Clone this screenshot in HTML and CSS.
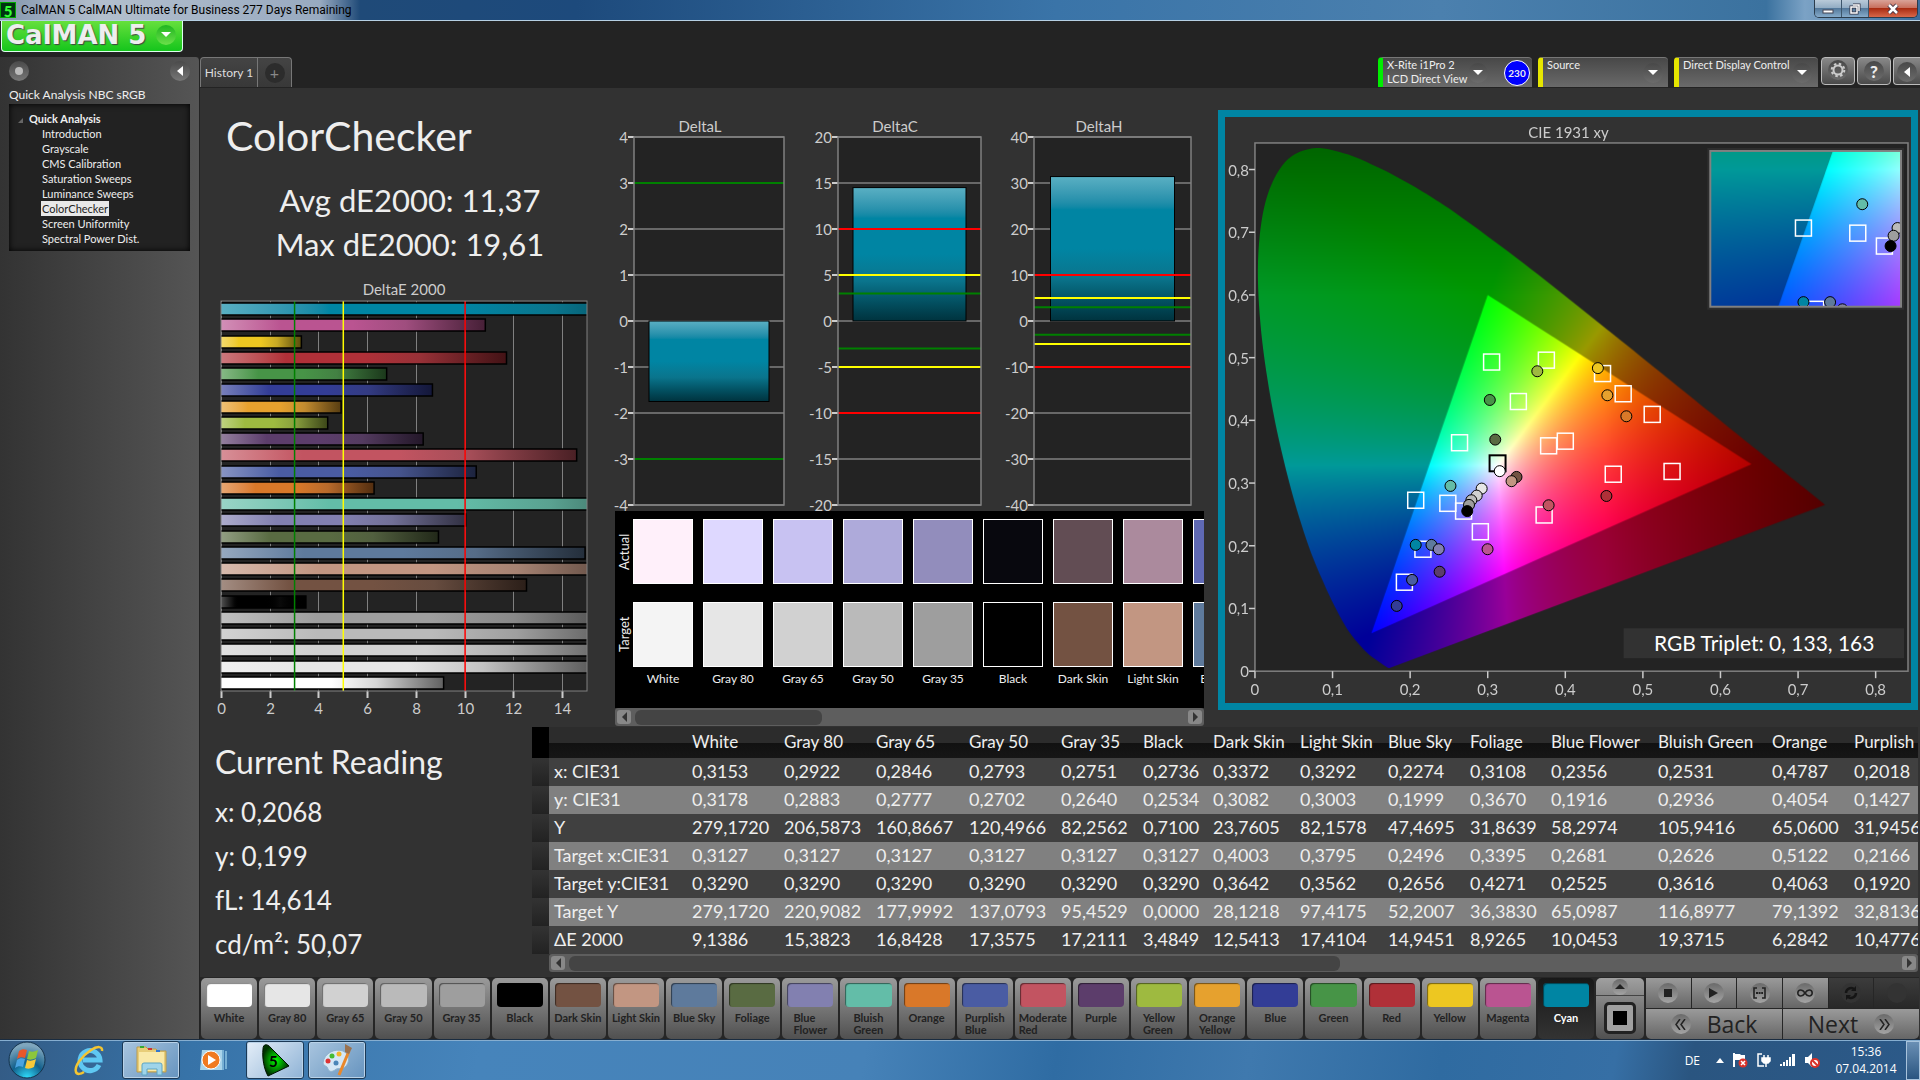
FILE: index.html
```html
<!DOCTYPE html>
<html lang="en">
<head>
  <meta charset="UTF-8">
  <meta name="viewport" content="width=device-width, initial-scale=1.0">
  <title>CalMAN 5</title>
  <link rel="stylesheet" href="styles.css">
</head>
<body>
  <div class="titlebar">
    <span class="app-icon">5</span>
    <span class="title">CalMAN 5 CalMAN Ultimate for Business 277 Days Remaining</span>
    <div class="window-buttons">
      <button aria-label="Minimize"><svg width="12" height="12"><rect x="1" y="7" width="10" height="3" fill="#fff" stroke="#445" /></svg></button>
      <button aria-label="Restore"><svg width="12" height="12" fill="none" stroke="#334" stroke-width="3"><path d="M4 2h6v6" /><rect x="2" y="4" width="6" height="6" /><g stroke="#fff" stroke-width="1.5"><path d="M4 2h6v6" /><rect x="2" y="4" width="6" height="6" /></g></svg></button>
      <button class="close" aria-label="Close"><svg width="14" height="12"><path d="M3 2l8 8M11 2l-8 8" stroke="#434" stroke-width="4.5" /><path d="M3 2l8 8M11 2l-8 8" stroke="#fff" stroke-width="2.5" /></svg></button>
    </div>
  </div>

  <header class="header">
    <button class="logo">
      <span class="logo-text">CalMAN 5</span>
      <span class="round lime"><svg width="10" height="6"><path d="M0 0h10L5 5z" fill="#fff" /></svg></span>
    </button>
  </header>

  <div class="app">
    <aside class="sidebar">
      <div class="sidebar-tools">
        <button class="round" aria-label="Pin"><svg width="10" height="10"><circle cx="5" cy="5" r="4" fill="#bbb" /></svg></button>
        <button class="round" aria-label="Collapse"><svg width="6" height="10"><path d="M6 0v10L0 5z" fill="#fff" /></svg></button>
      </div>
      <div class="workflow">Quick Analysis NBC sRGB</div>
      <nav class="tree">
        <div class="tree-title"><svg width="5" height="5"><path d="M5 0v5H0z" fill="#666" /></svg>Quick Analysis</div>
        <a href="#">Introduction</a>
        <a href="#">Grayscale</a>
        <a href="#">CMS Calibration</a>
        <a href="#">Saturation Sweeps</a>
        <a href="#">Luminance Sweeps</a>
        <a href="#" class="current">ColorChecker</a>
        <a href="#">Screen Uniformity</a>
        <a href="#">Spectral Power Dist.</a>
      </nav>
    </aside>

    <main class="main">
      <div class="tabs">
        <button class="tab">History 1</button>
        <button class="tab add" aria-label="Add"><span class="round dark">+</span></button>
        <div class="devices">
          <button class="device meter">
            <span class="device-name">X-Rite i1Pro 2<br>LCD Direct View</span>
            <span class="round dim"><svg width="10" height="6"><path d="M0 0h10L5 5z" fill="#fff" /></svg></span>
            <span class="badge">230</span>
          </button>
          <button class="device source">
            <span class="device-name">Source</span>
            <span class="round dim"><svg width="10" height="6"><path d="M0 0h10L5 5z" fill="#fff" /></svg></span>
          </button>
          <button class="device display">
            <span class="device-name">Direct Display Control</span>
            <span class="round dim"><svg width="10" height="6"><path d="M0 0h10L5 5z" fill="#fff" /></svg></span>
          </button>
          <button class="tool" aria-label="Settings"><span class="round dim"><svg width="16" height="16" fill="none" stroke="#ccc"><circle cx="8" cy="8" r="4.5" stroke-width="2" /><circle cx="8" cy="8" r="6.3" stroke-width="2" stroke-dasharray="2.5 2.45" /></svg></span></button>
          <button class="tool" aria-label="Help"><span class="round dim">?</span></button>
          <button class="tool last" aria-label="Hide"><span class="round dim"><svg width="6" height="10"><path d="M6 0v10L0 5z" fill="#fff" /></svg></span></button>
        </div>
      </div>

      <div class="charts">
        <section class="summary">
          <h1>ColorChecker</h1>
          <p class="stat">Avg dE2000: 11,37</p>
          <p class="stat">Max dE2000: 19,61</p>
          <svg id="deltaE" class="chart" viewBox="0 0 404 440"></svg>
        </section>

        <section class="deltas">
          <div class="delta-row">
            <svg id="deltaL" class="chart" viewBox="0 0 200 399"></svg>
            <svg id="deltaC" class="chart" viewBox="0 0 200 399"></svg>
            <svg id="deltaH" class="chart" viewBox="0 0 200 399"></svg>
          </div>
          <div class="compare">
            <div class="compare-titles"><span>Actual</span><span>Target</span></div>
            <div class="compare-list" id="compare"></div>
          </div>
          <div class="scrollbar">
            <button aria-label="Left"><svg width="5" height="10"><path d="M5 0v10L0 5z" /></svg></button>
            <div class="track"><div class="thumb short"></div></div>
            <button aria-label="Right"><svg width="5" height="10"><path d="M0 0v10L5 5z" /></svg></button>
          </div>
        </section>

        <section class="cie">
          <div class="cie-frame">
            <canvas id="gamut" width="687" height="587"></canvas>
            <svg id="cie" class="chart" viewBox="0 0 687 587"></svg>
          </div>
        </section>
      </div>

      <div class="readings">
        <section class="current-reading">
          <h2>Current Reading</h2>
          <p>x: 0,2068</p>
          <p>y: 0,199</p>
          <p>fL: 14,614</p>
          <p>cd/m²: 50,07</p>
        </section>
        <section class="grid">
          <div class="table-wrap">
            <table id="table"></table>
          </div>
          <div class="scrollbar">
            <button aria-label="Left"><svg width="5" height="10"><path d="M5 0v10L0 5z" /></svg></button>
            <div class="track"><div class="thumb long"></div></div>
            <button aria-label="Right"><svg width="5" height="10"><path d="M0 0v10L5 5z" /></svg></button>
          </div>
        </section>
      </div>

      <div class="bottom">
        <div class="patches" id="patches"></div>
        <div class="pattern">
          <button class="up" aria-label="Up"><span class="round mid"><svg width="10" height="6"><path d="M0 5h10L5 0z" fill="#222" /></svg></span></button>
          <button class="window" aria-label="Pattern window"><span></span></button>
        </div>
        <div class="controls">
          <button aria-label="Stop"><span class="round mid"><svg width="8" height="8"><rect width="8" height="8" fill="#222" /></svg></span></button>
          <button aria-label="Play"><span class="round mid"><svg width="9" height="10"><path d="M0 0l9 5-9 5z" fill="#222" /></svg></span></button>
          <button aria-label="Series"><span class="round mid"><svg width="13" height="12" fill="none" stroke="#222" stroke-width="1.6"><path d="M4 1H1v10h3M9 1h3v10H9" /><path d="M3 6h7" stroke-dasharray="2 .6" stroke-width="2" /></svg></span></button>
          <button aria-label="Continuous"><span class="round mid"><svg width="16" height="8" fill="none" stroke="#222" stroke-width="1.6"><path d="M8 4C6 1 4.500 1 3.800 1a3 3 0 0 0 0 6C4.500 7 6 7 8 4s3.500-3 4.200-3a3 3 0 0 1 0 6C11.500 7 10 7 8 4z" /></svg></span></button>
          <button class="off" aria-label="Refresh"><span class="round black"><svg width="14" height="14" fill="none" stroke="#151515" stroke-width="2.500"><path d="M2 7a5 5 0 0 1 8-4M12 7a5 5 0 0 1-8 4" /><path d="M12 0v5H7zM2 14V9h5z" fill="#151515" stroke="none" /></svg></span></button>
          <button class="off" aria-label="None"><span class="round black"></span></button>
          <button class="nav"><span class="round mid"><svg width="11" height="11" fill="none" stroke="#222" stroke-width="1.500"><path d="M5 0L1 5.500 5 11M10 0L6 5.500 10 11" /></svg></span>Back</button>
          <button class="nav next">Next<span class="round mid"><svg width="11" height="11" fill="none" stroke="#222" stroke-width="1.500"><path d="M1 0l4 5.500L1 11M6 0l4 5.500L6 11" /></svg></span></button>
        </div>
      </div>
    </main>
  </div>

  <footer class="taskbar">
    <button class="task" aria-label="Start">
      <svg width="38" height="38" viewBox="0 0 38 38">
        <defs><radialGradient id="orb" cx=".5" cy="1" r=".9"><stop offset="0" stop-color="#2fe0ff" /><stop offset=".5" stop-color="#12608c" /><stop offset="1" stop-color="#7fa6bd" /></radialGradient></defs>
        <circle cx="19" cy="19" r="18" fill="url(#orb)" stroke="#15334d" />
        <path d="M11 10c3-2 5-2 8-1l-2 8c-3-1-5-1-8 1z" fill="#e8572a" />
        <path d="M21 10c3 1 5 1 9-1l-2 8c-4 2-6 2-9 1z" fill="#8cc63c" />
        <path d="M9 19c3-2 5-2 8-1l-2 8c-3-1-5-1-8 1z" fill="#4aa3e0" />
        <path d="M19 19c3 1 5 1 9-1l-2 8c-4 2-6 2-9 1z" fill="#f8c93a" />
      </svg>
    </button>
    <button class="task" aria-label="Internet Explorer">
      <svg width="34" height="34" viewBox="0 0 34 34" fill="none">
        <path d="M27 22a10 10 0 1 1 1-5H11" stroke="#5fc8f2" stroke-width="5" />
        <path d="M30 8c1-5-5-5-11-1C10 13 2 23 4 29c1 3 5 2 8 0" stroke="#f4c531" stroke-width="2.500" />
      </svg>
    </button>
    <button class="task open" aria-label="Explorer">
      <svg width="34" height="32" viewBox="0 0 34 32">
        <path d="M3 3h9l2 2h8l2 2h8v21H3z" fill="#e8cd78" stroke="#b99b4c" />
        <path d="M5 8h25v19H5z" fill="#f9e9a8" />
        <rect x="6" y="2" width="4" height="2" fill="#3a3" /><rect x="14" y="4" width="4" height="2" fill="#c33" /><rect x="22" y="6" width="4" height="2" fill="#37c" />
        <path d="M8 31V21q0-2 2-2h16q2 0 2 2v10h-5v-6H13v6z" fill="#9fd4ea" stroke="#5da5c4" />
      </svg>
    </button>
    <button class="task" aria-label="Media Player">
      <svg width="28" height="26" viewBox="0 0 28 26">
        <path d="M3 3h20v20H1z" fill="#a9d4ea" /><path d="M24 3v20M27 4v18" stroke="#8cc4e2" stroke-width="1.500" />
        <circle cx="12" cy="13" r="9" fill="#f07a20" stroke="#fff" /><path d="M9 8l8 5-8 5z" fill="#fff" />
      </svg>
    </button>
    <button class="task open active" aria-label="CalMAN">
      <svg width="30" height="34" viewBox="0 0 30 34">
        <defs><radialGradient id="calman"><stop offset="0" stop-color="#0f0" /><stop offset="1" stop-color="#030" /></radialGradient></defs>
        <path d="M3 6C3 1 7 0 11 5l18 18L8 33C4 26 2 15 3 6z" fill="url(#calman)" stroke="#010" />
        <text x="9" y="24" class="task-five">5</text>
      </svg>
    </button>
    <button class="task open" aria-label="Paint">
      <svg width="32" height="34" viewBox="0 0 32 34">
        <path d="M2 20C3 10 14 5 22 8c7 3 7 12 2 16-4 3-7 0-10 3-3 2-6 2-7-1 0-3-5-3-5-6z" fill="#d5e8f6" stroke="#8fb3cd" />
        <circle cx="7" cy="18" r="2.500" fill="#d33" /><circle cx="11" cy="13" r="2.500" fill="#4b3" /><circle cx="18" cy="11" r="2.500" fill="#f4b52c" /><circle cx="15" cy="20" r="2.500" fill="#4a86b8" />
        <path d="M28 8L18 32" stroke="#e8882c" stroke-width="3" /><path d="M24 1l7 4-3 6-4-2z" fill="#9a7250" />
      </svg>
    </button>
    <div class="tray">
      <span class="lang">DE</span>
      <svg width="8" height="5"><path d="M0 5h8L4 0z" fill="#fff" /></svg>
      <svg width="16" height="16"><path d="M2 1v14" stroke="#fff" stroke-width="2" /><path d="M3 2h5l1 1h4v6H9L8 8H3z" fill="#fff" /><circle cx="11" cy="11" r="4.500" fill="#d8322a" /><path d="M9 9l4 4M13 9l-4 4" stroke="#fff" stroke-width="1.500" /></svg>
      <svg width="16" height="16" fill="none" stroke="#fff" stroke-width="1.500"><path d="M6 2H2v12h6M8 3v3M12 3v3M10 11v4" /><path d="M6 6h8v3l-2 2H8L6 9z" fill="#fff" /></svg>
      <svg width="16" height="14" fill="#fff"><path d="M0 11h2v2H0zM3 9h2v4H3zM6 7h2v6H6zM9 4h2v9H9zM12 1h3v12h-3z" /></svg>
      <svg width="16" height="16"><path d="M1 5h3l4-4v14l-4-4H1z" fill="#fff" /><circle cx="11" cy="11" r="4" fill="#fff" stroke="#d8322a" stroke-width="2" /><path d="M8 8l6 6" stroke="#d8322a" stroke-width="2" /></svg>
      <div class="clock">15:36<br>07.04.2014</div>
      <button class="show-desktop" aria-label="Show desktop"></button>
    </div>
  </footer>
  <script src="script.js"></script>
</body>
</html>
```

FILE: styles.css
```css
* {
  box-sizing: border-box;
}
body {
  margin: 0;
  height: 100vh;
  display: flex;
  flex-direction: column;
  overflow: hidden;
  background: #232323;
  color: #eee;
  font-family: Lato, "Open Sans", sans-serif;
  font-size: 12px;
}
button {
  font: inherit;
  color: inherit;
  border: 0;
  padding: 0;
  background: none;
}
h1, h2, p {
  margin: 0;
  font-weight: 400;
}

/* title bar */
.titlebar {
  flex: none;
  height: 21px;
  display: flex;
  align-items: center;
  padding-right: 2px;
  border-bottom: 1px solid #b6d0e4;
  background: linear-gradient(90deg, #8497ae 0, #b3bfcd 100px, #98aac0 320px, #1f4a78 360px, #1d4a7c 30%, #3a74a8 55%, #4b80ae 75%, #3b729f 92%, #7ba2c5 94%, #3b6d9d 100%);
}
.app-icon {
  width: 16px;
  height: 16px;
  line-height: 16px;
  text-align: center;
  font-weight: 900;
  font-size: 15px;
  color: #3f3;
  background: #031;
  border: 1px solid #0a0;
}
.title {
  flex: 1;
  padding-left: 5px;
  color: #000;
  font: 12px Roboto, sans-serif;
}
.window-buttons {
  align-self: flex-start;
  display: flex;
  height: 18px;
  border: 1px solid #2b3c4c;
  border-top: 0;
  border-radius: 0 0 5px 5px;
  overflow: hidden;
}
.window-buttons button {
  width: 27px;
  display: flex;
  align-items: center;
  justify-content: center;
  border-right: 1px solid #3d566c;
  background: linear-gradient(#b9cad9, #93adc4 45%, #54799b 50%, #86abcb);
}
.window-buttons .close {
  width: 48px;
  border: 0;
  background: linear-gradient(#d9a398, #c8705e 45%, #a92c12 50%, #d8684a);
}

/* logo strip */
.header {
  flex: none;
  height: 36px;
  padding-left: 1px;
}
.logo {
  display: flex;
  align-items: center;
  justify-content: space-between;
  width: 182px;
  height: 31px;
  padding: 0 6px 2px 4px;
  border: 1px solid #dfe;
  border-top: 0;
  border-radius: 0 0 4px 4px;
  background: linear-gradient(#66e03c, #15c51c);
}
.logo-text {
  font: bold 26px "DejaVu Sans", sans-serif;
  white-space: nowrap;
  color: #eee;
  text-shadow: 1px 1px 1px #444;
}
.round {
  flex: none;
  display: inline-flex;
  align-items: center;
  justify-content: center;
  width: 20px;
  height: 20px;
  border-radius: 50%;
  background: linear-gradient(#4a4a4a, #777);
}
.round.lime { background: linear-gradient(#1fb51f, #6be04a); }
.round.dark { background: #2c2c2c; color: #888; font-size: 16px; }
.round.dim { background: linear-gradient(#484848, #6c6c6c); }
.round.mid { background: linear-gradient(#6a6a6a, #a4a4a4); }
.round.black { background: #333; }

.app {
  flex: 1;
  min-height: 0;
  display: flex;
}
.sidebar {
  flex: none;
  width: 200px;
  padding: 4px 9px;
  border-right: 1px solid #222;
  border-radius: 0 4px 0 0;
  background: linear-gradient(90deg, #333, #555);
}
.sidebar-tools {
  display: flex;
  justify-content: space-between;
}
.workflow {
  margin-top: 5px;
  font-size: 12px;
  line-height: 18px;
}
.tree {
  display: flex;
  flex-direction: column;
  align-items: flex-start;
  height: 147px;
  padding: 7px 0 0 32px;
  background: #222;
  box-shadow: inset 0 0 6px #000;
  font-size: 11px;
}
.tree-title {
  margin-left: -23px;
  font-weight: 700;
  line-height: 15px;
}
.tree-title svg {
  margin-right: 6px;
}
.tree a {
  padding: 0 1px;
  color: #eee;
  line-height: 15px;
  height: 15px;
  text-decoration: none;
}
.tree .current {
  background: #e8e8e8;
  color: #222;
}

/* top tabs */
.main {
  flex: 1;
  min-width: 0;
  display: flex;
  flex-direction: column;
  padding-right: 2px;
  background: #323232;
}
.tabs {
  flex: none;
  height: 31px;
  display: flex;
  align-items: flex-start;
  margin-right: -2px;
  background: #232323;
}
.tab {
  width: 58px;
  height: 30px;
  border: 1px solid #777;
  border-bottom: 0;
  border-radius: 4px 0 0 0;
  background: linear-gradient(#444, #383838);
  color: #ddd;
}
.tab.add {
  width: 34px;
  border-left: 0;
  border-radius: 0 4px 0 0;
}
.devices {
  flex: 1;
  display: flex;
  justify-content: flex-end;
  gap: 2px;
}
.device {
  display: flex;
  align-items: center;
  height: 30px;
  margin-right: 4px;
  padding: 0 5px 0 4px;
  border-left: 5px solid #e6e600;
  border-top: 1px solid #777;
  border-radius: 4px 4px 0 0;
  background: linear-gradient(#484848, #6a6a6a);
  text-align: left;
}
.device.meter { width: 154px; padding-right: 2px; border-left-color: #0e0; }
.device.source { width: 130px; }
.device.display { width: 144px; margin-right: 1px; }
.device-name {
  flex: 1;
  align-self: flex-start;
  font-size: 11px;
  line-height: 14px;
  white-space: nowrap;
}
.device.display {
  padding-right: 6px;
}
.badge {
  flex: none;
  width: 26px;
  height: 26px;
  margin-left: 16px;
  border: 1px solid #fff;
  border-radius: 50%;
  background: #00f;
  font-size: 10px;
  font-weight: 700;
  line-height: 24px;
  text-align: center;
}
.tool {
  width: 34px;
  height: 28px;
  border: 1px solid #bbb;
  border-radius: 4px;
  background: linear-gradient(#888, #4a4a4a);
  font-size: 17px;
  font-weight: 900;
}
.tool.last {
  width: 27px;
  border-right: 0;
  border-radius: 4px 0 0 4px;
}

/* charts */
.charts {
  display: grid;
  grid-template-columns: minmax(0, 404fr) minmax(0, 600fr) minmax(0, 714fr);
  align-items: start;
  padding-bottom: 1px;
}
.chart {
  display: block;
  width: 100%;
  height: auto;
  overflow: visible;
  font-size: 15px;
  fill: #ccc;
}
.summary h1 {
  padding: 18px 0 0 26px;
  font-size: 41px;
  line-height: 60px;
}
.stat {
  padding-left: 16px;
  text-align: center;
  font-size: 31px;
  line-height: 44px;
}
.stat:nth-of-type(1) {
  margin-top: 12px;
}
.summary .chart {
  margin-top: 14px;
}
.deltas {
  padding-top: 24px;
}
.delta-row {
  display: flex;
}
.delta-row .chart {
  flex: 1;
  min-width: 0;
}
.compare {
  display: flex;
  height: 197px;
  margin-left: 11px;
  padding-top: 8px;
  background: #000;
  overflow: hidden;
}
.compare-titles {
  flex: none;
  display: flex;
  flex-direction: column;
  gap: 18px;
  width: 18px;
}
.compare-titles span {
  height: 65px;
  line-height: 18px;
  font-size: 13px;
  text-align: center;
  writing-mode: vertical-rl;
  transform: rotate(180deg);
}
.compare-list {
  display: flex;
  gap: 10px;
  min-width: 0;
}
.compare-item {
  flex: none;
  width: 60px;
  text-align: center;
  line-height: 24px;
  white-space: nowrap;
}
.swatch {
  height: 65px;
  border: 1px solid #fff;
}
.swatch + .swatch {
  margin-top: 18px;
}
.scrollbar {
  display: flex;
  align-items: center;
  height: 18px;
  padding: 0 2px;
  border-radius: 3px;
  background: #5e5e5e;
}
.deltas .scrollbar {
  margin-left: 11px;
}
.scrollbar button {
  width: 14px;
  height: 14px;
  border-radius: 3px;
  background: #888;
  fill: #333;
  line-height: 0;
}
.track {
  flex: 1;
  padding: 0 4px;
}
.thumb {
  height: 15px;
  border-radius: 6px;
  background: #444;
}
.thumb.short { width: 34%; }
.thumb.long { width: 58%; }
.cie {
  padding: 22px 0 0 14px;
}
.cie-frame {
  position: relative;
  border: 7px solid #0085a3;
}
.cie-frame .chart {
  position: relative;
}
#gamut {
  position: absolute;
  left: 0;
  top: 0;
  width: 100%;
  height: auto;
}
.triplet {
  font-size: 21px;
  fill: #fff;
}

/* readings */
.readings {
  flex: 1;
  min-height: 0;
  display: flex;
}
.current-reading {
  flex: none;
  width: 332px;
  padding: 10px 0 0 15px;
}
.current-reading h2 {
  margin-bottom: 3px;
  font-size: 32px;
  line-height: 50px;
}
.current-reading p {
  font-size: 26px;
  line-height: 44px;
}
.grid {
  flex: 1;
  min-width: 0;
}
.grid .scrollbar {
  margin-left: 17px;
}
.table-wrap {
  overflow: hidden;
}
table {
  table-layout: fixed;
  width: 1434px;
  border-collapse: collapse;
  font-size: 18px;
  white-space: nowrap;
}
th, td {
  height: 28px;
  padding: 0 0 2px 5px;
  font-weight: 400;
  text-align: left;
}
thead th {
  height: 31px;
  font-size: 17px;
  background: linear-gradient(#2c2c2c 50%, #111 50%, #161616);
}
tbody tr {
  background: #404040;
}
tbody tr:nth-child(even) {
  background: #808080;
}
tbody tr td:first-child {
  background: linear-gradient(#333, #222);
}
thead td {
  background: #000;
}

/* patches and controls */
.bottom {
  flex: none;
  display: flex;
  gap: 2px;
  height: 62px;
  padding-top: 1px;
  margin-right: -1px;
  background: #262626;
}
.patches {
  flex: 1;
  min-width: 0;
  display: flex;
  gap: 2px;
  padding-left: 1px;
}
.patch {
  flex: 1 1 0;
  min-width: 0;
  height: 61px;
  padding: 5px 4px 0;
  display: flex;
  flex-direction: column;
  align-items: center;
  border-radius: 5px;
  background: linear-gradient(#9a9a9a, #505050);
  color: #222;
  font-size: 11px;
  font-weight: 700;
  line-height: 12px;
  text-align: left;
}
.patch i {
  flex: none;
  align-self: stretch;
  height: 24px;
  margin: 0 1px 5px;
  border-radius: 4px;
  box-shadow: inset 1px 1px 1px rgba(0, 0, 0, 0.5);
}
.patch span {
  white-space: pre;
}
.patch.selected {
  background: linear-gradient(#181818, #333);
  color: #fff;
}
.pattern {
  flex: none;
  width: 48px;
  display: flex;
  flex-direction: column;
}
.up {
  height: 18px;
  border-radius: 5px 5px 0 0;
  border-bottom: 1px solid #444;
  background: linear-gradient(#a0a0a0, #888);
  line-height: 0;
}
.up .round {
  width: 16px;
  height: 16px;
}
.window {
  flex: 1;
  display: flex;
  align-items: center;
  justify-content: center;
  border-radius: 0 0 5px 5px;
  background: linear-gradient(#888, #505050);
}
.window span {
  width: 32px;
  height: 32px;
  border: 3px solid #222;
  border-radius: 5px;
  background: linear-gradient(#000, #000) center / 14px 14px no-repeat, #a0a0a0;
}
.controls {
  flex: none;
  width: 273px;
  display: grid;
  grid-template-columns: repeat(6, 1fr);
  grid-template-rows: 30px 30px;
  gap: 1px;
}
.controls button {
  display: flex;
  align-items: center;
  justify-content: center;
  background: linear-gradient(#9a9a9a, #666);
  color: #222;
}
.controls .off {
  background: linear-gradient(#3c3c3c, #282828);
}
.controls .nav {
  grid-column: span 3;
  gap: 16px;
  font-family: "Open Sans", sans-serif;
  font-size: 23px;
  border-radius: 0 0 0 5px;
}
.controls .next {
  border-radius: 0 0 5px 0;
}

/* taskbar */
.taskbar {
  flex: none;
  height: 41px;
  display: flex;
  align-items: center;
  padding-left: 6px;
  border-top: 1px solid #1a2c40;
  box-shadow: inset 0 1px #86aed0;
  background: linear-gradient(100deg, #335b85 0, #3773a8 10%, #4684bb 25%, #4682b8 45%, #2f6ca3 55%, #3f79ae 65%, #2f6ba1 75%, #366fa5 84%, #2a5580 88%, #2c5a89 100%);
}
.task {
  width: 58px;
  height: 38px;
  margin-right: 4px;
  line-height: 0;
}
.task:first-child {
  width: 42px;
  margin-right: 12px;
}
.task.open {
  border: 1px solid #1b3956;
  border-radius: 3px;
  box-shadow: inset 0 0 0 1px #b9d2e8;
  background: linear-gradient(135deg, #a9c5df, #6694bf);
}
.task.active {
  background: linear-gradient(135deg, #e4eef8, #8fb3d6);
}
.task-five {
  font: bold 15px Lato, sans-serif;
}
.tray {
  margin-left: auto;
  display: flex;
  align-items: center;
  gap: 8px;
  height: 100%;
  font: 12px "Open Sans", sans-serif;
  color: #fff;
}
.lang {
  margin-right: 8px;
}
.clock {
  width: 76px;
  text-align: center;
  line-height: 17px;
}
.show-desktop {
  width: 14px;
  height: 39px;
  margin-left: -6px;
  border: 1px solid #a8c3dc;
  background: linear-gradient(#6a8fb4, #2a5580);
}
```

FILE: script.js
```js
const patches = [
  // name, target colour, measured colour, dE, x, y, Y, target x, target y, target Y, column width
  ['White', '#ffffff', '#fff0fa', '9,1386', '0,3153', '0,3178', '279,1720', '0,3127', '0,3290', '279,1720', 92],
  ['Gray 80', '#e6e6e6', '#ded8ff', '15,3823', '0,2922', '0,2883', '206,5873', '0,3127', '0,3290', '220,9082', 92],
  ['Gray 65', '#d1d1d1', '#c8c2f2', '16,8428', '0,2846', '0,2777', '160,8667', '0,3127', '0,3290', '177,9992', 93],
  ['Gray 50', '#bababa', '#aeaada', '17,3575', '0,2793', '0,2702', '120,4966', '0,3127', '0,3290', '137,0793', 92],
  ['Gray 35', '#9e9e9e', '#928dbc', '17,2111', '0,2751', '0,2640', '82,2562', '0,3127', '0,3290', '95,4529', 82],
  ['Black', '#000000', '#08080e', '3,4849', '0,2736', '0,2534', '0,7100', '0,3127', '0,3290', '0,0000', 70],
  ['Dark Skin', '#735242', '#624d54', '12,5413', '0,3372', '0,3082', '23,7605', '0,4003', '0,3642', '28,1218', 87],
  ['Light Skin', '#c29682', '#ab8a9d', '17,4104', '0,3292', '0,3003', '82,1578', '0,3795', '0,3562', '97,4175', 88],
  ['Blue Sky', '#5e7a9c', '#5f69b4', '14,9451', '0,2274', '0,1999', '47,4695', '0,2496', '0,2656', '52,2007', 82],
  ['Foliage', '#596b42', '', '8,9265', '0,3108', '0,3670', '31,8639', '0,3395', '0,4271', '36,3830', 81],
  ['Blue Flower', '#8280b0', '', '10,0453', '0,2356', '0,1916', '58,2974', '0,2681', '0,2525', '65,0987', 107],
  ['Bluish Green', '#63bda8', '', '19,3715', '0,2531', '0,2936', '105,9416', '0,2626', '0,3616', '116,8977', 114],
  ['Orange', '#d97829', '', '6,2842', '0,4787', '0,4054', '65,0600', '0,5122', '0,4063', '79,1392', 82],
  ['Purplish Blue', '#4a5ca3', '', '10,4776', '0,2018', '0,1427', '31,9456', '0,2166', '0,1920', '32,8136', 117],
  ['Moderate Red', '#c25461', '', '14,6'],
  ['Purple', '#5c3d6b', '', '8,3'],
  ['Yellow Green', '#9eba40', '', '4,38'],
  ['Orange Yellow', '#e6a12e', '', '4,93'],
  ['Blue', '#333d96', '', '8,68'],
  ['Green', '#479447', '', '6,8'],
  ['Red', '#b03038', '', '11,72'],
  ['Yellow', '#edc721', '', '3,3'],
  ['Magenta', '#ba5491', '', '10,85'],
  ['Cyan', '#0085a3', '', '19,61']
];

const rowNames = ['x: CIE31', 'y: CIE31', 'Y', 'Target x:CIE31', 'Target y:CIE31', 'Target Y', 'ΔE 2000'];
const rowFields = [4, 5, 6, 7, 8, 9, 3];

const targets = [
  [.305, .493], [.3756, .496], [.448, .4746], [.4746, .4424], [.512, .4095], [.3395, .43], [.2637, .3643],
  [.3785, .3594], [.4, .3668], [.4618, .3141], [.5376, .3185], [.2072, .2726], [.2486, .2677],
  [.2689, .2553], [.3727, .2491], [.2905, .2224], [.2165, .1945], [.1926, .1419]
];
// patch index, x, y
const measured = [
  [16, .3639, .4783], [21, .442, .4833], [17, .4542, .44], [12, .4787, .4065], [19, .3027, .4325],
  [9, .3097, .3693], [0, .3155, .319], [6, .3371, .3098], [7, .3307, .303], [11, .252, .2955],
  [1, .2922, .2912], [2, .2858, .28], [3, .2789, .2726], [4, .2759, .2652], [5, .2736, .2553],
  [14, .3785, .2646], [20, .453, .2794], [23, .2072, .2014], [8, .2275, .2014], [10, .2369, .1945],
  [22, .2998, .1945], [15, .238, .1586], [13, .2025, .1456], [18, .1827, .1041]
];
const locus = [
  [.1741, .005], [.1714, .0051], [.1644, .0109], [.1566, .0177], [.144, .0297], [.1241, .0578], [.1096, .0868],
  [.0913, .1327], [.0687, .2007], [.0454, .295], [.0235, .4127], [.0082, .5384], [.0039, .6548], [.0139, .7502],
  [.0389, .812], [.0743, .8338], [.1142, .8262], [.1547, .8059], [.1929, .7816], [.2296, .7543], [.2658, .7243],
  [.3373, .6589], [.4087, .5896], [.4788, .5202], [.5448, .4544], [.6029, .3965], [.6482, .3514], [.6915, .3083],
  [.719, .2809], [.7347, .2653]
];
const srgb = [[.3, .6], [.64, .33], [.15, .06]];

function rect(x, y, w, h, attrs) {
  return `<rect x="${x}" y="${y}" width="${w}" height="${h}" ${attrs || ''}/>`;
}

function line(x1, y1, x2, y2, color, width) {
  return `<line x1="${x1}" y1="${y1}" x2="${x2}" y2="${y2}" stroke="${color}" stroke-width="${width || 1}"/>`;
}

function text(x, y, s, anchor, cls) {
  return `<text x="${x}" y="${y}" text-anchor="${anchor || 'middle'}" class="${cls || ''}">${s}</text>`;
}

function gradient(id, color, vertical) {
  return `<linearGradient id="${id}" x2="${vertical ? 0 : 1}" y2="${vertical ? 1 : 0}">
    <stop offset="0" stop-color="color-mix(in srgb, ${color}, #fff 35%)"/><stop offset=".23" stop-color="${color}"/>
    <stop offset=".5" stop-color="${color}"/><stop offset=".7" stop-color="color-mix(in srgb, ${color}, #333 20%)"/>
    <stop offset="1" stop-color="color-mix(in srgb, ${color}, #000 62%)"/></linearGradient>`;
}

function drawDeltaE() {
  const left = 21, top = 21, width = 366, height = 390, unit = 24.36;
  let s = text(204, 15, 'DeltaE 2000') + rect(left, top, width, height, 'fill="#232323"');
  for (let v = 0; v <= 14; v += 2) {
    const x = Math.round(left + v * unit) + .5;
    s += line(x, top, x, top + height, '#808080') + line(x, top + height, x, top + height + 7, '#ccc', 2);
    s += text(x, 434, v);
  }
  patches.slice().reverse().forEach((p, i) => {
    const value = parseFloat(p[3].replace(',', '.'));
    const y = Math.round(top + 2 + i * 16.25);
    s += gradient('bar' + i, p[1]);
    // long bars run out of the plot, the nested svg clips them
    s += `<svg x="${left}" y="${y - 1}" width="${width}" height="14">` +
      rect(-1, 1, value * unit + 1, 12, `fill="url(#bar${i})" stroke="#000" stroke-width="1.5"`) + '</svg>';
  });
  [[3, 'green'], [5, 'yellow'], [10, 'red']].forEach(([v, c]) => {
    s += line(left + v * unit + .5, top, left + v * unit + .5, top + height, c, 1.5);
  });
  s += rect(left, top, width, height, 'fill="none" stroke="#808080"');
  document.getElementById('deltaE').innerHTML = s;
}

function drawDelta(id, title, left, right, titleX, step, value, barWidth, lines) {
  const top = 25, unit = 46;
  const yOf = v => top + unit * (4 - v / step);
  let s = text(titleX, 20, title) + rect(left, top, right - left, unit * 8, 'fill="#232323"');
  for (let i = -4; i <= 4; i++) {
    const y = yOf(i * step);
    s += line(left, y, right, y, '#808080', 1.5) + line(left - 6, y, left, y, '#ccc', 2);
    s += text(left - 6, y + 6, i * step, 'end');
  }
  const y = yOf(Math.max(0, value));
  s += gradient(id + 'Bar', '#0085a3', true);
  s += rect((left + right - barWidth) / 2, y, barWidth, Math.abs(value) / step * unit, `fill="url(#${id}Bar)" stroke="#000"`);
  lines.forEach(([v, c]) => {
    s += line(left, yOf(v), right, yOf(v), c, 2);
  });
  s += rect(left, top, right - left, unit * 8, 'fill="none" stroke="#808080" stroke-width="1.5"');
  document.getElementById(id).innerHTML = s;
}

// the two views of the diagram: whole plot and magnified corner
const plot = { left: 30, top: 26, width: 654, height: 529, x: v => 30 + v * 777, y: v => 555 - v * 628 };
const zoomed = { left: 486, top: 34, width: 191, height: 156, x: v => 486 + (v - .1362) * 1314, y: v => 34 + (.3467 - v) * 1042 };

function markers(view) {
  const px = v => view.x(v) - view.left;
  const py = v => view.y(v) - view.top;
  let s = `<svg x="${view.left}" y="${view.top}" width="${view.width}" height="${view.height}">`;
  targets.forEach(([x, y]) => {
    s += rect(px(x) - 8, py(y) - 8, 16, 16, 'fill="none" stroke="#fff" stroke-width="1.5"');
  });
  s += rect(px(.3127) - 8, py(.3315) - 8, 16, 16, 'fill="none" stroke="#000" stroke-width="2"');
  measured.forEach(([i, x, y]) => {
    s += `<circle cx="${px(x)}" cy="${py(y)}" r="5.5" fill="${patches[i][1]}" stroke="#000"/>`;
  });
  return s + '</svg>';
}

function drawCie() {
  let s = text(344, 21, 'CIE 1931 xy');
  s += rect(plot.left, plot.top, plot.width, plot.height, 'fill="none" stroke="#808080" stroke-width="1.5"');
  for (let i = 0; i <= 8; i++) {
    const label = i ? '0,' + i : '0';
    const x = plot.x(i / 10);
    const y = plot.y(i / 10);
    s += line(x, 555, x, 562, '#ccc', 1.5) + text(x, 579, label);
    s += line(24, y, 30, y, '#ccc', 1.5) + text(24, y + 6, label, 'end');
  }
  s += markers(plot);
  s += markers(zoomed) + rect(zoomed.left, zoomed.top, zoomed.width, zoomed.height, 'fill="none" stroke="#808080" stroke-width="2"');
  s += rect(399, 512, 281, 30, 'fill="#323232"') + text(540, 535, 'RGB Triplet: 0, 133, 163', 'middle', 'triplet');
  document.getElementById('cie').innerHTML = s;
}

function xyToRgb(x, y) {
  const X = x / y, Z = (1 - x - y) / y;
  const rgb = [
    3.2406 * X - 1.5372 - 0.4986 * Z,
    -0.9689 * X + 1.8758 + 0.0415 * Z,
    0.0557 * X - 0.204 + 1.057 * Z
  ].map(c => Math.max(0, c));
  const max = Math.max(...rgb);
  return rgb.map(c => c / max * 255);
}

// extra points between the given ones (Catmull-Rom)
function smooth(points) {
  const at = i => points[Math.min(Math.max(i, 0), points.length - 1)];
  const result = [];
  for (let i = 0; i < points.length - 1; i++) {
    const [a, b, c, d] = [at(i - 1), at(i), at(i + 1), at(i + 2)];
    for (let t = 0; t < 1; t += .125) {
      result.push([0, 1].map(k => .5 * (2 * b[k] + (c[k] - a[k]) * t +
        (2 * a[k] - 5 * b[k] + 4 * c[k] - d[k]) * t * t +
        (3 * b[k] - a[k] - 3 * c[k] + d[k]) * t * t * t)));
    }
  }
  result.push(at(points.length - 1));
  return result;
}

function tracePath(ctx, view, points) {
  ctx.beginPath();
  points.forEach(([x, y]) => ctx.lineTo(view.x(x), view.y(y)));
  ctx.closePath();
}

function fillGamut(ctx, view, shape, level) {
  const w = ctx.canvas.width, h = ctx.canvas.height;
  const layer = document.createElement('canvas');
  layer.width = w;
  layer.height = h;
  const layerCtx = layer.getContext('2d');
  const image = layerCtx.createImageData(w, h);
  const x0 = view.x(0), y0 = view.y(0);
  const sx = view.x(1) - x0, sy = view.y(1) - y0;
  for (let j = 0; j < h; j++) {
    for (let i = 0; i < w; i++) {
      const x = (i - x0) / sx;
      const y = Math.max((j - y0) / sy, .001);
      const shade = level * (1 - 1.6 * Math.max(0, x - .45)) * (1 - 1.45 * Math.max(0, y - .6));
      const rgb = xyToRgb(x, y);
      const k = (j * w + i) * 4;
      image.data[k] = rgb[0] * shade;
      image.data[k + 1] = rgb[1] * shade;
      image.data[k + 2] = rgb[2] * shade;
      image.data[k + 3] = 255;
    }
  }
  layerCtx.putImageData(image, 0, 0);
  ctx.save();
  ctx.beginPath();
  ctx.rect(view.left, view.top, view.width, view.height);
  ctx.clip();
  tracePath(ctx, view, shape);
  ctx.clip();
  ctx.drawImage(layer, 0, 0);
  ctx.restore();
}

function drawGamut() {
  const ctx = document.getElementById('gamut').getContext('2d');
  const outline = smooth(locus);
  ctx.fillStyle = '#232323';
  ctx.fillRect(plot.left, plot.top, plot.width, plot.height);
  fillGamut(ctx, plot, outline, .6);
  fillGamut(ctx, plot, srgb, 1);
  ctx.fillStyle = '#2e2e2e';
  ctx.fillRect(zoomed.left - 3, zoomed.top - 3, zoomed.width + 6, zoomed.height + 6);
  fillGamut(ctx, zoomed, outline, .6);
  fillGamut(ctx, zoomed, srgb, 1);
}

function fillTable() {
  const columns = patches.filter(p => p.length > 4);
  let s = '<colgroup><col style="width:17px"><col style="width:138px">';
  columns.forEach(p => s += `<col style="width:${p[10]}px">`);
  s += '</colgroup><thead><tr><td></td><th></th>';
  columns.forEach(p => s += `<th scope="col">${p[0]}</th>`);
  s += '</tr></thead><tbody>';
  rowNames.forEach((name, r) => {
    s += `<tr><td></td><th scope="row">${name}</th>`;
    columns.forEach(p => s += `<td>${p[rowFields[r]]}</td>`);
    s += '</tr>';
  });
  document.getElementById('table').innerHTML = s + '</tbody>';
}

function fillPatches() {
  document.getElementById('compare').innerHTML = patches.slice(0, 9).map(p => `<div class="compare-item">
    <div class="swatch" style="background:${p[2]}"></div>
    <div class="swatch" style="background:${p[0] === 'White' ? '#f4f4f4' : p[1]}"></div>${p[0]}</div>`).join('');

  const twoLines = ['Blue Flower', 'Bluish Green', 'Purplish Blue', 'Moderate Red', 'Yellow Green', 'Orange Yellow'];
  document.getElementById('patches').innerHTML = patches.map(p => {
    const name = twoLines.includes(p[0]) ? p[0].replace(' ', '\n') : p[0];
    return `<button class="patch ${p[0] === 'Cyan' ? 'selected' : ''}"><i style="background:${p[1]}"></i><span>${name}</span></button>`;
  }).join('');
}

drawDeltaE();
drawDelta('deltaL', 'DeltaL', 30, 180, 96, 1, -1.75, 120, [[3, 'green'], [-3, 'green']]);
drawDelta('deltaC', 'DeltaC', 34, 177, 91, 5, 14.5, 113, [[10, 'red'], [5, 'yellow'], [3, 'green'], [-3, 'green'], [-5, 'yellow'], [-10, 'red']]);
drawDelta('deltaH', 'DeltaH', 30, 187, 95, 10, 31.4, 124, [[10, 'red'], [5, 'yellow'], [3, 'green'], [-3, 'green'], [-5, 'yellow'], [-10, 'red']]);
drawGamut();
drawCie();
fillTable();
fillPatches();
```
